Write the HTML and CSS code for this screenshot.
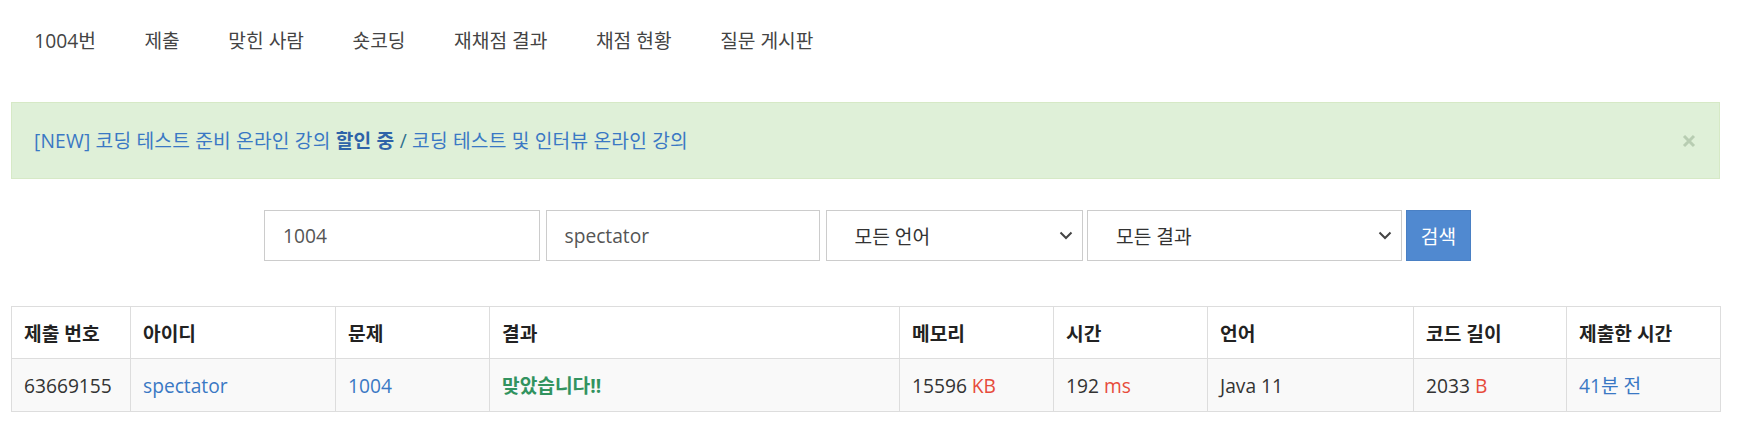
FILE: index.html
```html
<!DOCTYPE html>
<html lang="ko">
<head>
<meta charset="utf-8">
<title>채점 현황</title>
<link rel="stylesheet" href="styles.css">
</head>
<body>
<div class="page">
  <nav class="tabs">
    <a class="tab" href="#">1004번</a>
    <a class="tab" href="#">제출</a>
    <a class="tab" href="#">맞힌 사람</a>
    <a class="tab" href="#">숏코딩</a>
    <a class="tab" href="#">재채점 결과</a>
    <a class="tab" href="#">채점 현황</a>
    <a class="tab" href="#">질문 게시판</a>
  </nav>

  <div class="alert">
    <p class="alert-text"><a href="#" class="alert-link">[NEW] 코딩 테스트 준비 온라인 강의 <b>할인 중</b></a> / <a href="#" class="alert-link">코딩 테스트 및 인터뷰 온라인 강의</a></p>
    <button class="close" type="button" aria-label="닫기">
      <svg width="14" height="14" viewBox="0 0 14 14"><path d="M2 2 L12 12 M12 2 L2 12" stroke="currentColor" stroke-width="3" stroke-linecap="butt"/></svg>
    </button>
  </div>

  <form class="search">
    <div class="field f-problem">1004</div>
    <div class="field f-user">spectator</div>
    <div class="field select f-lang"><span>모든 언어</span><svg class="chev" width="14" height="9" viewBox="0 0 14 9"><path d="M1.5 1.5 L7 7 L12.5 1.5" fill="none" stroke="#444" stroke-width="2"/></svg></div>
    <div class="field select f-result"><span>모든 결과</span><svg class="chev" width="14" height="9" viewBox="0 0 14 9"><path d="M1.5 1.5 L7 7 L12.5 1.5" fill="none" stroke="#444" stroke-width="2"/></svg></div>
    <button class="btn" type="button">검색</button>
  </form>

  <table class="status">
    <thead>
      <tr>
        <th class="c1">제출 번호</th>
        <th class="c2">아이디</th>
        <th class="c3">문제</th>
        <th class="c4">결과</th>
        <th class="c5">메모리</th>
        <th class="c6">시간</th>
        <th class="c7">언어</th>
        <th class="c8">코드 길이</th>
        <th class="c9">제출한 시간</th>
      </tr>
    </thead>
    <tbody>
      <tr>
        <td>63669155</td>
        <td><a href="#" class="link">spectator</a></td>
        <td><a href="#" class="link">1004</a></td>
        <td><span class="ac">맞았습니다!!</span></td>
        <td>15596 <span class="unit">KB</span></td>
        <td>192 <span class="unit">ms</span></td>
        <td>Java 11</td>
        <td>2033 <span class="unit">B</span></td>
        <td><a href="#" class="link">41분 전</a></td>
      </tr>
    </tbody>
  </table>
</div>
</body>
</html>
```
FILE: styles.css
```css
* { box-sizing: border-box; }
html, body { margin: 0; padding: 0; background: #fff; }
body {
  font-family: "Open Sans", "Noto Sans CJK KR", sans-serif;
  font-size: 19.2px;
  color: #333;
}
a { text-decoration: none; }
.page {
  width: 1709px;
  margin-left: 11px;
}

/* nav */
.tabs {
  display: flex;
  height: 82px;
  align-items: center;
  margin-left: -1px;
}
.tab {
  color: #444;
  padding: 0 24.3px;
  line-height: 26px;
}

/* alert */
.alert {
  margin-top: 20px;
  height: 77px;
  background: #dff0d8;
  border: 1px solid #d6e9c6;
  display: flex;
  align-items: center;
  justify-content: space-between;
  padding: 0 22px;
}
.alert-text {
  margin: 0;
  color: #31708f;
  line-height: 26px;
  letter-spacing: 0.2px;
}
.alert-link { color: #3a78c4; }
.alert-link b { color: #2e63a8; font-weight: 700; }
.close {
  border: 0;
  background: none;
  padding: 0;
  margin-right: 1px;
  color: #b8cdb2;
  display: flex;
  align-items: center;
}

/* search form */
.search {
  display: flex;
  margin-top: 31px;
  padding-left: 253px;
}
.field {
  height: 51px;
  border: 1px solid #ccc;
  background: #fff;
  color: #555;
  display: flex;
  align-items: center;
  padding-left: 18px;
}
.f-problem { width: 276px; }
.f-user { width: 274px; margin-left: 5.5px; }
.f-lang { width: 257.5px; margin-left: 6px; }
.f-result { width: 315px; margin-left: 4px; }
.select {
  justify-content: space-between;
  padding-left: 28px;
  padding-right: 9px;
  color: #333;
}
.chev { display: block; }
.btn {
  width: 65px;
  height: 51px;
  margin-left: 4px;
  background: #5089d0;
  border: 1px solid #4a80c4;
  color: #fff;
  font-family: "Open Sans", "Noto Sans CJK KR", sans-serif;
  font-size: 19.2px;
  padding: 0;
}

/* table */
.status {
  margin-top: 45px;
  width: 1709px;
  border-collapse: collapse;
  table-layout: fixed;
  font-size: 19.2px;
}
.status th, .status td {
  border: 1px solid #ddd;
  text-align: left;
  padding: 0 12px;
  white-space: nowrap;
}
.status th {
  height: 52px;
  font-weight: 700;
  color: #222;
  background: #fff;
}
.status td {
  height: 53px;
  background: #f9f9f9;
  color: #333;
}
.c1 { width: 119px; }
.c2 { width: 205px; }
.c3 { width: 154px; }
.c4 { width: 410px; }
.c5 { width: 154px; }
.c6 { width: 154px; }
.c7 { width: 206px; }
.c8 { width: 153px; }
.c9 { width: 154px; }
.link { color: #3a78c4; }
.ac { color: #32935f; font-weight: 700; }
.unit { color: #e74c3c; }
```
